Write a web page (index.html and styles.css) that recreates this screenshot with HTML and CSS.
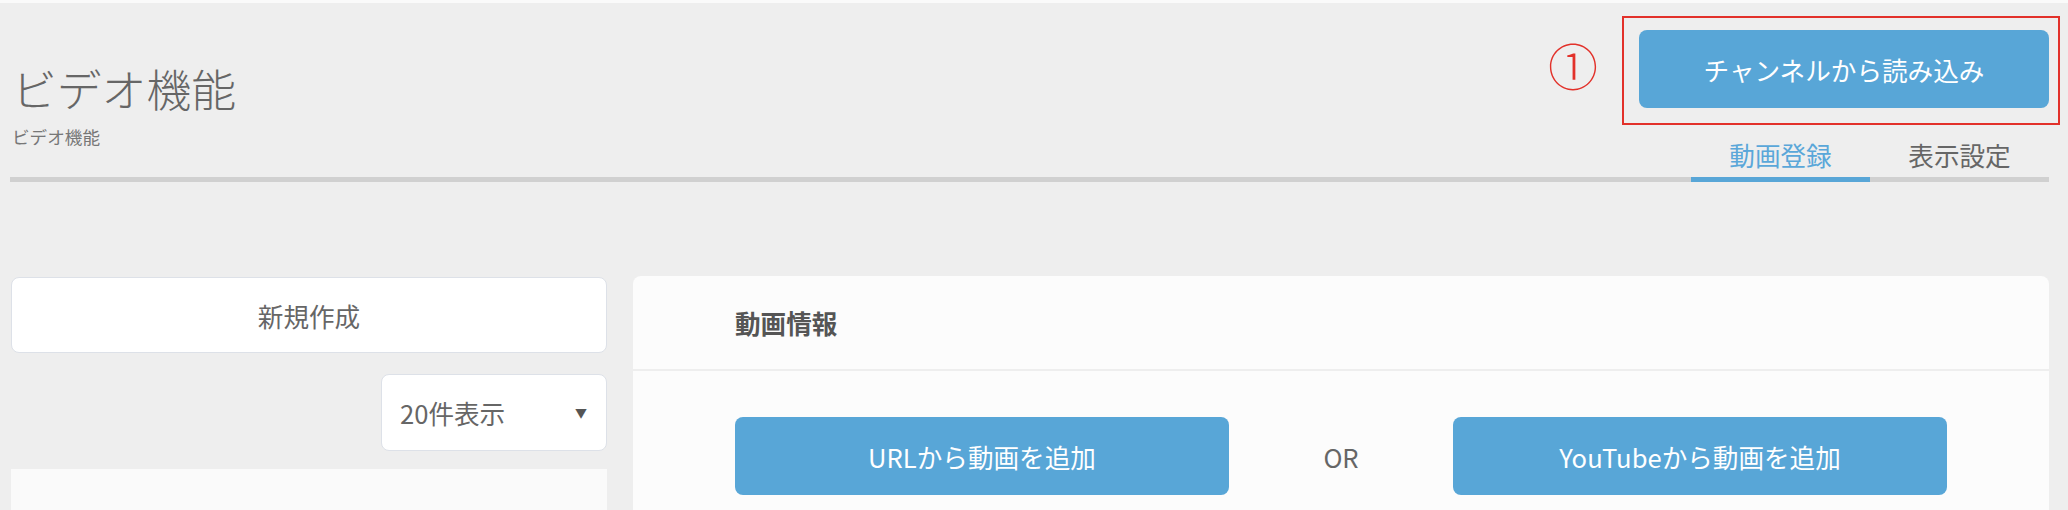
FILE: index.html
```html
<!DOCTYPE html>
<html lang="ja">
<head>
<meta charset="utf-8">
<title>ビデオ機能</title>
<link rel="stylesheet" href="styles.css">
</head>
<body>
<div class="topline"></div>
<header class="page-header">
  <div class="title-block">
    <h1 class="title">ビデオ機能</h1>
    <div class="breadcrumb">ビデオ機能</div>
  </div>
  <div class="header-actions">
    <div class="action-row">
      <span class="marker">①</span>
      <div class="callout">
        <button class="btn btn-primary btn-channel">チャンネルから読み込み</button>
      </div>
    </div>
    <nav class="tabs">
      <a class="tab tab-active">動画登録</a>
      <a class="tab">表示設定</a>
    </nav>
  </div>
</header>
<main class="content">
  <aside class="sidebar">
    <div class="new-card">新規作成</div>
    <div class="select-row">
      <div class="select">
        <span>20件表示</span>
        <span class="caret">▼</span>
      </div>
    </div>
    <div class="list-panel"></div>
  </aside>
  <section class="panel">
    <div class="panel-header">動画情報</div>
    <div class="panel-body">
      <button class="btn btn-primary btn-add">URLから動画を追加</button>
      <span class="or">OR</span>
      <button class="btn btn-primary btn-add">YouTubeから動画を追加</button>
    </div>
  </section>
</main>
</body>
</html>
```
FILE: styles.css
```css
* { box-sizing: border-box; }

html, body {
  margin: 0;
  padding: 0;
}

body {
  background: #eeeeee;
  font-family: "Noto Sans CJK JP", "Noto Sans", sans-serif;
  color: #666666;
  overflow: hidden;
}

.topline {
  height: 3px;
  background: #fafafa;
}

.page-header {
  display: flex;
  justify-content: space-between;
  align-items: flex-start;
  margin: 0 19px 0 10px;
  border-bottom: 5px solid #d0d0d0;
}

.title-block {
  padding-top: 58px;
  padding-left: 2px;
}

.title {
  margin: 0;
  font-size: 44.8px;
  line-height: 53px;
  font-weight: 300;
  color: #666666;
}

.breadcrumb {
  margin-top: 11px;
  font-size: 17.6px;
  line-height: 24px;
  color: #777777;
}

.header-actions {
  display: flex;
  flex-direction: column;
  align-items: flex-end;
}

.action-row {
  display: flex;
  align-items: center;
  margin-top: 13px;
  margin-right: -11px;
}

.marker {
  color: #e2312a;
  font-size: 50px;
  font-weight: 300;
  line-height: 1;
  margin-right: 24px;
  margin-top: -14px;
}

.callout {
  border: 2px solid #e2312a;
  padding: 12px 9px 15px 15px;
}

.btn {
  border: none;
  font-family: inherit;
  cursor: pointer;
}

.btn-primary {
  background: #58a6d7;
  color: #ffffff;
  border-radius: 8px;
}

.btn-channel {
  display: block;
  width: 410px;
  height: 78px;
  font-size: 25.6px;
}

.tabs {
  display: flex;
  margin-bottom: -5px;
}

.tab {
  width: 179px;
  padding: 12px 0 5px;
  text-align: center;
  font-size: 25.6px;
  line-height: 35px;
  color: #666666;
  border-bottom: 5px solid transparent;
}

.tab-active {
  color: #5aa7d9;
  border-bottom-color: #58a6d7;
}

.content {
  display: flex;
  gap: 26px;
  padding: 94px 19px 0 11px;
}

.sidebar {
  width: 596px;
  flex: none;
  display: flex;
  flex-direction: column;
}

.new-card {
  height: 76px;
  margin-top: 1px;
  display: flex;
  align-items: center;
  justify-content: center;
  background: #ffffff;
  border: 1px solid #dde1e8;
  border-radius: 8px;
  font-size: 25.6px;
  color: #666666;
}

.select-row {
  display: flex;
  justify-content: flex-end;
  margin-top: 21px;
}

.select {
  width: 226px;
  height: 77px;
  display: flex;
  align-items: center;
  justify-content: space-between;
  padding: 0 19px 0 18px;
  background: #ffffff;
  border: 1px solid #dde1e8;
  border-radius: 8px;
  font-size: 25.6px;
  color: #666666;
}

.caret {
  font-size: 12px;
  color: #555555;
}

.list-panel {
  margin-top: 18px;
  height: 200px;
  background: #fafafa;
}

.panel {
  flex: 1;
  background: #fcfcfc;
  border-radius: 8px 8px 0 0;
  height: 300px;
}

.panel-header {
  height: 95px;
  display: flex;
  align-items: center;
  padding-left: 102px;
  font-size: 25.6px;
  font-weight: 700;
  color: #555555;
  border-bottom: 2px solid #eeeeee;
}

.panel-body {
  display: flex;
  align-items: center;
  padding: 46px 102px 0;
}

.btn-add {
  width: 494px;
  height: 78px;
  font-size: 25.6px;
  flex: none;
}

.or {
  flex: 1;
  text-align: center;
  font-size: 25.6px;
  color: #666666;
}
```
